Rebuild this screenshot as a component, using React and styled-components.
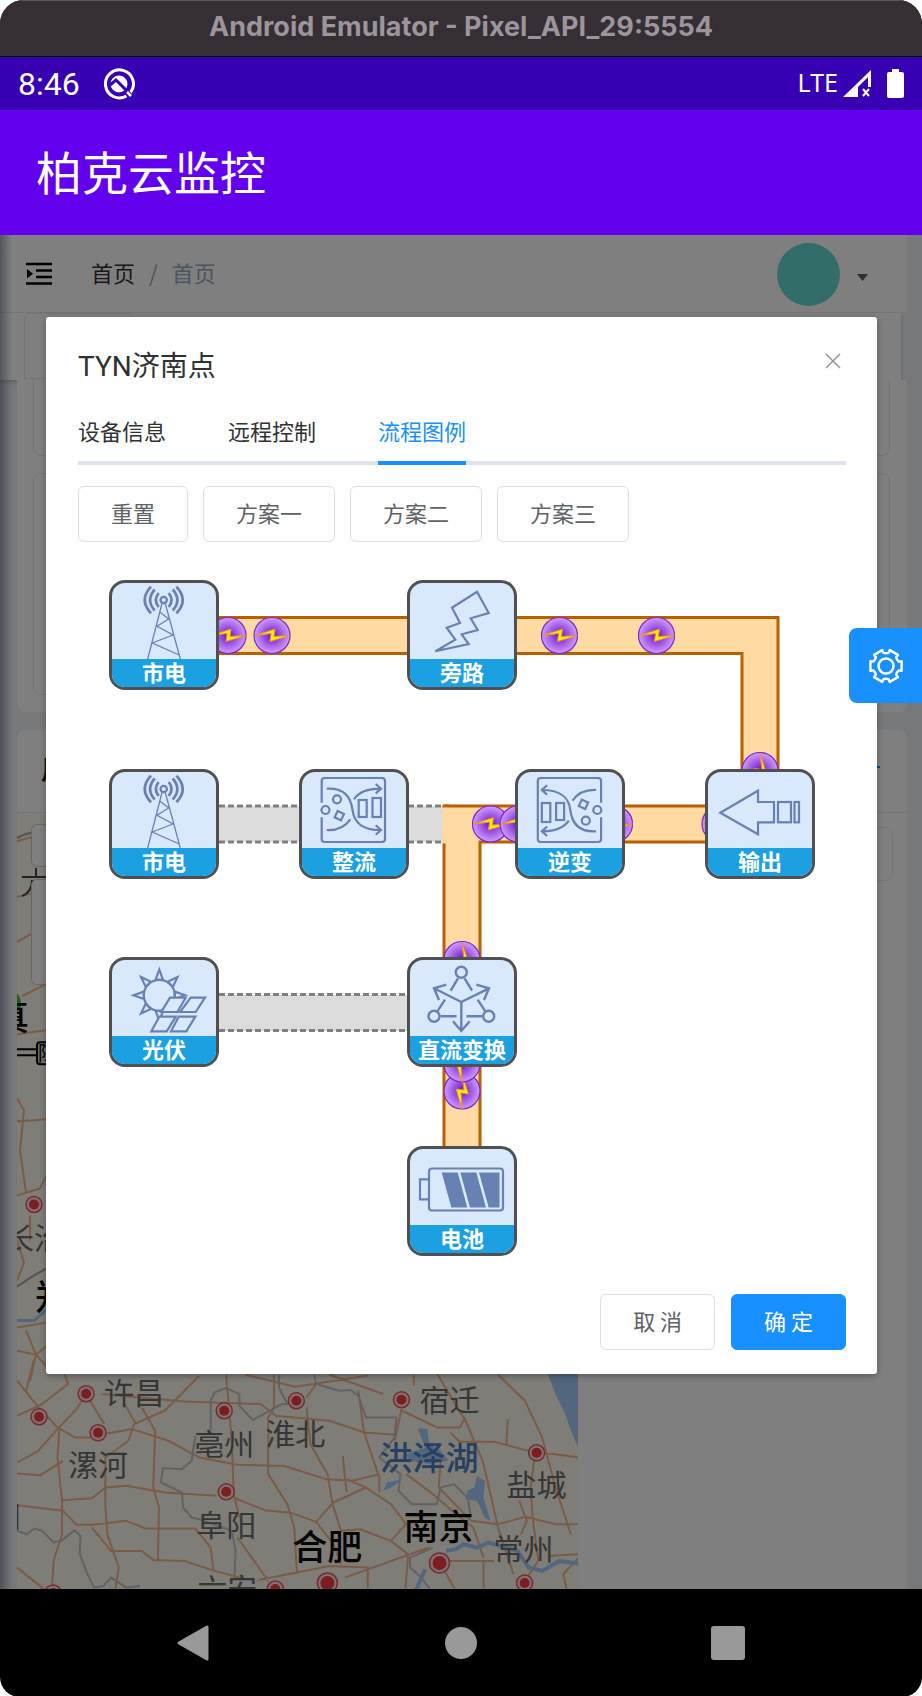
import React from 'react';
import styled, { createGlobalStyle, css } from 'styled-components';

const sans = '"Noto Sans CJK SC", "Noto Sans", sans-serif';
const latin = 'Roboto, "Noto Sans CJK SC", sans-serif';
const blue = '#1890ff';

const GlobalStyle = createGlobalStyle`
  *, *::before, *::after { box-sizing: border-box; }
  html { background: #fff; }
  body { margin: 0; font-family: ${sans}; }
  button { font: inherit; border: 0; padding: 0; background: none; cursor: pointer; }
  svg { display: block; }
`;

const Emulator = styled.div`
  display: flex;
  flex-direction: column;
  min-height: 100vh;
  border-radius: 24px 24px 20px 20px;
  overflow: hidden;
  background: #000;
`;

const TitleBar = styled.header`
  height: 57px;
  text-align: center;
  background: #352e34;
  border-top: 1px solid #5d575c;
  border-bottom: 1px solid #000;
  color: #9c959b;
  font: 700 27px/52px Inter, sans-serif;
`;

const StatusBar = styled.div`
  display: flex;
  align-items: center;
  justify-content: space-between;
  height: 53px;
  padding: 0 18px;
  background: #3700b3;
  color: #fff;
`;

const StatusGroup = styled.div`
  display: flex;
  align-items: center;
  gap: ${(p) => p.$gap}px;
`;

const Clock = styled.time`
  font: 400 32px/40px ${latin};
`;

const Network = styled.span`
  font: 400 25px/36px "Noto Sans", sans-serif;
  margin-right: 4px;
  padding-bottom: 4px;
`;

const AppBar = styled.div`
  display: flex;
  align-items: center;
  height: 125px;
  padding: 0 36px 6px;
  background: #6200ee;
`;

const AppTitle = styled.h1`
  margin: 0;
  color: #fff;
  font-size: 46px;
  font-weight: 400;
  line-height: 60px;
`;

const WebView = styled.div`
  flex: 1;
  display: grid;
  grid-template-columns: minmax(0, 1fr);
  position: relative;
`;

const Page = styled.div`
  grid-area: 1 / 1;
  display: flex;
  flex-direction: column;
  min-height: 0;
  position: relative;
  overflow: hidden;
  padding-right: 15px;
  background: #eef0f5;
  &::after {
    content: '';
    position: absolute;
    inset: 0 auto 0 0;
    width: 12px;
    background: linear-gradient(90deg, rgba(0, 21, 41, 0.35), rgba(0, 21, 41, 0));
  }
`;

const PageHeader = styled.div`
  display: flex;
  align-items: center;
  height: 78px;
  padding: 0 39px 0 26px;
  background: #fff;
  border-bottom: 1px solid #eceef2;
`;

const Crumbs = styled.nav`
  display: flex;
  flex: 1;
  gap: 14px;
  margin-left: 38px;
  padding-bottom: 4px;
  font-size: 22px;
  line-height: 30px;
  color: #97a8be;
`;

const Crumb = styled.a`
  color: ${(p) => (p.$current ? '#97a8be' : '#303133')};
  text-decoration: none;
`;

const Avatar = styled.div`
  width: 63px;
  height: 63px;
  margin: 2px 17px 0 0;
  border-radius: 50%;
  background: #66dad5;
`;

const Caret = styled.svg`
  margin-top: 7px;
`;

const TagStrip = styled.div`
  height: 67px;
  padding-left: 24px;
  margin-right: 6px;
  flex: none;
  background: #fff;
  box-shadow: 0 2px 4px rgba(0, 0, 0, 0.2);
`;

const Tag = styled.div`
  width: 110px;
  height: 66px;
  border: 1px solid #e4e7ed;
  border-radius: 6px 6px 0 0;
`;

const Card = styled.section`
  display: flex;
  flex-direction: column;
  margin-left: 17px;
  background: #fff;
  ${(p) =>
    p.$grow
      ? css`
          flex: 1;
          min-height: 0;
          margin-top: 18px;
          border-radius: 8px 8px 0 0;
        `
      : css`
          gap: 17px;
          padding: 0 17px 17px 16px;
          border-radius: 0 0 8px 8px;
        `}
`;

const Outline = styled.div`
  height: ${(p) => p.$height}px;
  border: 1px solid #e6e8f0;
  border-radius: ${(p) => (p.$open ? '0 0 8px 8px' : '8px')};
  border-top-width: ${(p) => (p.$open ? 0 : 1)}px;
`;

const CardHead = styled.div`
  display: flex;
  align-items: center;
  justify-content: space-between;
  height: 83px;
  flex: none;
  padding: 0 27px 8px 24px;
  border-bottom: 1px solid #e6e8f0;
  font-size: 26px;
  font-weight: 700;
  color: #222;
`;

const More = styled.span`
  width: 3px;
  height: 2px;
  background: ${blue};
`;

const MapRow = styled.div`
  display: flex;
  flex: 1;
  min-height: 0;
`;

const MapPane = styled.div`
  position: relative;
  width: 63%;
  overflow: hidden;
  background: #fefaf1;
`;

const MapControls = styled.div`
  position: absolute;
  top: 11px;
  left: 14px;
  width: 60px;
`;

const MapControl = styled.div`
  height: ${(p) => p.$height}px;
  margin-bottom: 12px;
  background: #fff;
  border: 1px solid #ccc;
  border-radius: 6px;
`;

const SidePane = styled.div`
  flex: 1;
  padding: 14px 14px 0;
`;

const Mask = styled.div`
  grid-area: 1 / 1;
  position: relative;
  padding: 82px 45px 0 46px;
  background: rgba(0, 0, 0, 0.5);
`;

const Dialog = styled.section`
  display: flex;
  flex-direction: column;
  padding: 32px 31px 24px 32px;
  background: #fff;
  border-radius: 3px;
  box-shadow: 0 2px 6px rgba(0, 0, 0, 0.3);
`;

const DialogHead = styled.div`
  display: flex;
  justify-content: space-between;
  margin-bottom: 31px;
`;

const DialogTitle = styled.h2`
  margin: 0;
  font: 400 28px/36px ${latin};
  color: #303133;
`;

const CloseButton = styled.button`
  width: 26px;
  height: 24px;
  display: grid;
  place-items: center;
`;

const Tabs = styled.div`
  display: flex;
  gap: 62px;
  background: linear-gradient(#dfe4ea, #dfe4ea) bottom / 100% 4px no-repeat;
`;

const Tab = styled.button`
  padding-bottom: 17px;
  font-size: 22px;
  line-height: 28px;
  color: ${(p) => (p.$active ? blue : '#303133')};
  border-bottom: 4px solid ${(p) => (p.$active ? blue : 'transparent')};
`;

const ButtonRow = styled.div`
  display: flex;
  gap: ${(p) => (p.$end ? 16 : 15)}px;
  justify-content: ${(p) => (p.$end ? 'flex-end' : 'flex-start')};
  margin-top: ${(p) => (p.$end ? 39 : 21)}px;
`;

const Button = styled.button`
  height: 56px;
  padding: 0 32px 4px;
  border: 1px solid ${(p) => (p.$primary ? blue : '#dcdfe6')};
  border-radius: 6px;
  background: ${(p) => (p.$primary ? blue : '#fff')};
  color: ${(p) => (p.$primary ? '#fff' : '#606266')};
  font-size: 22px;
  line-height: 28px;
`;

const Canvas = styled.div`
  position: relative;
  height: 675px;
  margin: 38px 0 0 31px;
`;

const NodeBox = styled.div`
  position: absolute;
  left: ${(p) => p.$x}px;
  top: ${(p) => p.$y}px;
  width: 110px;
  height: 110px;
  border: 3px solid #505050;
  border-radius: 16px;
  overflow: hidden;
  background: #dae8fc;
`;

const NodeLabel = styled.div`
  height: 28px;
  background: #1ba1e2;
  color: #fff;
  text-align: center;
  font-size: 22px;
  font-weight: 700;
  line-height: 24px;
  white-space: nowrap;
`;

const SettingsButton = styled.button`
  position: absolute;
  right: 0;
  top: 393px;
  width: 73px;
  height: 75px;
  display: grid;
  place-items: center;
  background: ${blue};
  border-radius: 8px 0 0 8px;
`;

const NavBar = styled.nav`
  display: grid;
  grid-template-columns: repeat(3, 1fr);
  justify-items: center;
  align-items: center;
  height: 108px;
  padding: 0 60px;
`;

const NavButton = styled.button`
  width: 40px;
  height: 40px;
`;

/* ---------- node icons ---------- */

const Tower = () => (
  <>
    <circle cx="54.7" cy="20" r="3.2" />
    <path strokeWidth="1.3" d="M53 23.5 38.7 79M56.3 23.5 71.3 79M51 32.3 59.7 39 48 46.3 64 55 43.3 63 70.3 75" />
    <path
      strokeWidth="2.7"
      d="M42 6.7Q29.500 20 42 33.300M45.700 9.500Q36.500 20 45.700 30.500M49.700 13Q44 20 49.700 27M67.400 6.700Q80 20 67.400 33.300M63.700 9.500Q73 20 63.700 30.500M59.700 13Q65.400 20 59.700 27"
    />
  </>
);

const Bolt = () => (
  <path d="M70 11.700 81.700 33 63.700 38.300 70.700 50 54.700 54.300 61.700 64 28.300 71.300 48.300 59.700 39.700 47.700 53 43 45 27.700Z" />
);

const Rectifier = () => (
  <>
    <path d="M22.700 33.700V12a3 3 0 0 1 3-3H83a3 3 0 0 1 3 3V70a3 3 0 0 1-3 3H25.700a3 3 0 0 1-3-3V48.300" />
    <circle cx="26.500" cy="41" r="4" />
    <circle cx="38" cy="30.300" r="4" />
    <rect x="36.800" y="43.200" width="7" height="7" transform="rotate(25 40.300 46.700)" />
    <path d="M27.700 19.700C46 18.500 52 29 53.500 41 55 53 62 61 82 61M27.700 61C38 61.500 46 58 51.300 50.300M55 30.300C60 23 69 19.500 82 19.700M76.700 15 82 19.700 76.700 24.300M76.700 56.300 82 61 76.700 65.700" />
    <rect x="59.700" y="31" width="8" height="17" />
    <rect x="73.500" y="29" width="8.500" height="19" />
  </>
);

const Inverter = () => (
  <g transform="rotate(180 54.400 41)">
    <Rectifier />
  </g>
);

const Output = () => (
  <>
    <path d="M15.300 43.700 53 21.700V33H69V53.300H53V65.300Z" />
    <rect x="73" y="33" width="13" height="20.300" />
    <rect x="89.500" y="33" width="4.500" height="20.300" />
  </>
);

const Solar = () => (
  <>
    <circle cx="50.300" cy="38.300" r="15.500" />
    {[0, 45, 90, 180, 225, 270, 315].map((a) => (
      <path key={a} transform={`rotate(${a} 50.300 38.300)`} d="M50.300 12.500 54 22.800H46.600Z" />
    ))}
    <g fill="#dae8fc">
      <path d="M61 40.700H76.700L68.300 55H52.300ZM81.700 40.700H96L86.700 55H71ZM50.300 59.700H66.700L57.700 74.300H42.300ZM69.700 59.700H86.300L77.300 74.300H62Z" />
    </g>
  </>
);

const Converter = () => (
  <g strokeWidth="2.400">
    <circle cx="54.300" cy="15.300" r="5.500" />
    <circle cx="27" cy="59.300" r="5.500" />
    <circle cx="81.700" cy="59.300" r="5.500" />
    <path d="M54.300 45 27 31.300M54.300 45 82 31.300M54.300 45V74M39.300 27.700 27 31.300 32 43M69.300 27.700 82 31.300 77 43M46 64.300 54.300 74 62.700 64.300M51 21.300 43.700 33.700M57.600 21.300 65 33.700M38 42.700 30.300 54.300M70.600 42.700 78.400 54.300M33.700 59.300H49.700M59.500 59.300H75.500" />
  </g>
);

const Battery = () => (
  <>
    <rect x="22" y="22.500" width="74" height="42" rx="3" />
    <path d="M22 33.300H13V53.300H22" />
    <path
      fill="#6881b3"
      stroke="none"
      d="M34.700 26.500H50.700L60.300 61.500H44.300ZM53.300 26.500H69.300L79 61.500H63ZM72 26.500H92.500V61.500H81.700Z"
    />
  </>
);

const nodes = [
  { x: 0, y: 0, label: '市电', Icon: Tower },
  { x: 298, y: 0, label: '旁路', Icon: Bolt },
  { x: 0, y: 189, label: '市电', Icon: Tower },
  { x: 190, y: 189, label: '整流', Icon: Rectifier },
  { x: 406, y: 189, label: '逆变', Icon: Inverter },
  { x: 596, y: 189, label: '输出', Icon: Output },
  { x: 0, y: 377, label: '光伏', Icon: Solar },
  { x: 298, y: 377, label: '直流变换', Icon: Converter },
  { x: 298, y: 566, label: '电池', Icon: Battery },
];

const DiagramNode = ({ x, y, label, Icon }) => (
  <NodeBox $x={x} $y={y}>
    <svg width="104" height="76" viewBox="3 3 104 76" fill="none" stroke="#6881b3" strokeWidth="2.200" aria-hidden="true">
      <Icon />
    </svg>
    <NodeLabel>{label}</NodeLabel>
  </NodeBox>
);

/* ---------- pipes and moving charges ---------- */

const charges = [
  [119, 55.5, 0],
  [163, 55.5, 0],
  [450.5, 55.5, 0],
  [547.5, 55.5, 0],
  [651, 190.5, 90],
  [381.500, 244, 0],
  [409, 244, 0],
  [505.500, 244, 0],
  [611, 244, 0],
  [353, 379.500, 90],
  [353, 511, 90],
  [353, 484, 90],
];

const Pipes = () => (
  <svg width="706" height="675" viewBox="0 0 706 675" fill="none" aria-hidden="true">
    <defs>
      <radialGradient id="charge">
        <stop offset="0" stopColor="#6a0fc4" />
        <stop offset="0.3" stopColor="#8a3bd8" />
        <stop offset="1" stopColor="#cf9cff" />
      </radialGradient>
    </defs>
    <path d="M100 244H340M100 433H310" stroke="#dcdcdc" strokeWidth="36" />
    <path
      d="M110 226H340M110 262H340M110 414.500H310M110 450.500H310"
      stroke="#808080"
      strokeWidth="3"
      strokeDasharray="6 3"
    />
    {[
      ['#b85f00', 39],
      ['#ffdba3', 33],
    ].map(([color, width]) => (
      <path
        key={color}
        stroke={color}
        strokeWidth={width}
        d="M100 55.500H651V200M353 390V244H620M353 480V580"
      />
    ))}
    <path d="M333 227.500H338V263.500H333Z" fill="#ffdba3" />
    {charges.map(([x, y, turn]) => (
      <g key={`${x}-${y}`} transform={`translate(${x} ${y}) rotate(${turn})`}>
        <circle r="18" fill="url(#charge)" stroke="#7d22cc" strokeWidth="1.200" />
        <path d="M-17 0 3-6.500 2 1 18 0-2 6-1-2Z" fill="#fff000" stroke="#ee8c30" strokeWidth="1" />
      </g>
    ))}
  </svg>
);

/* ---------- map ---------- */

const roads =
  'M88 0 68 90M45 60 90 125 150 200 195 230H240M45 165 110 130 178 70 155 0M45 305 100 270 150 205 200 145 224 100M230 110 272 190M265 100 480 122 680 130 720 165 860 180 950 215 1035 222M520 45 430 150 350 190 335 240 300 270 275 290V430L280 520 310 620 300 690M280 218 345 205 440 240 520 290 620 312 740 315 850 355 920 360 990 340M325 130 355 190M370 140 405 210 400 380 415 440 412 600M155 205 150 290 162 420V520L140 600 135 690M45 338 105 343 165 300M162 418 240 412 275 380 330 375 430 395 565 405M590 42 605 240 610 400 625 470M610 410 690 448 760 456 825 483 870 550 890 610M715 42V140L700 170V340L750 430 768 500 775 635M800 140 810 250 855 340 868 430 890 510 940 505 1020 540 1065 580 1058 690M825 483 870 425 955 380 1020 430 1060 490 1020 540M955 380 905 355M895 285 900 350 905 395M640 42 770 78 960 45M825 70 800 110M860 42 1000 100M1080 42V75M1050 150 1140 200H1200L1215 170M1048 145 1030 240M935 90 950 215 990 350V395M1120 0 1215 180 1260 300 1300 500 1340 640M1300 42 1370 120 1415 230 1450 380 1490 520M1175 215 1200 243H1290L1370 268 1510 290M1325 175 1322 250M45 433 165 450 200 492H240L330 480 380 503H510L550 560 557 630M240 500 290 570H370L400 597 480 600 560 630 640 655M675 657 860 615 960 620V690M900 650 1070 580 1120 560M620 530 700 660M1150 300 1145 380 1230 480 1300 490 1370 468 1450 490H1510M1170 600H1290M1160 630 1190 690M1262 602V690M1395 290 1385 380 1390 470 1405 600 1375 650M1355 420 1375 480 1360 520M1430 585 1510 580M1510 590 1470 640 1480 690M45 620 120 690M1060 340 1130 400 1180 450 1235 500 1262 590';

const borders =
  'M45 510 70 520 90 503 110 510 140 545 160 540 195 508 210 525 208 580 225 630 245 680 270 675 290 650 330 680 365 675M550 210V120L560 95 590 82 625 100V135L660 178 735 130H750L728 80V42M820 42 825 70 885 90 915 88 935 105 955 170H1035L1030 230 990 290 1045 340 1040 390 1075 430H1140L1150 380 1185 370 1220 410 1228 460M510 225 500 300 475 325 425 322 420 365 475 395 478 440 500 470 520 475 605 510 615 570 612 650M1130 560 1070 590V620L1100 650 1125 690';

const markers = [
  [34, 1204, 5], [86, 1393, 5], [39, 1416, 5], [98, 1432, 5], [224, 1410, 5], [296, 1400, 5], [401, 1399, 5],
  [536, 1452, 5], [226, 1491, 5], [439, 1562, 7], [327, 1582, 7], [275, 1588, 5], [524, 1582, 5], [53, 1592, 5],
];

const cities = [
  ['许昌', 104, 1403], ['漯河', 68, 1475], ['亳州', 194, 1454], ['淮北', 265, 1444], ['宿迁', 419, 1410],
  ['盐城', 506, 1495], ['阜阳', 196, 1535], ['常州', 493, 1559], ['六安', 197, 1599], ['阳', -9, 1526], ['长治', 4, 1248],
];

const capitals = [['合肥', 292, 1559], ['南京', 403, 1539], ['郑', 35, 1309], ['真', -6, 1030]];

const RoadMap = () => (
  <svg width="100%" height="100%" viewBox="17 813 560 775" preserveAspectRatio="xMinYMin slice" fill="none" fontFamily={sans}>
    <g stroke="#f5b78c" strokeWidth="2">
      <path d="M17 841 36 836M17 897 33 893M17 942 46 925 80 920M22 996 46 984M17 1034 46 1030M17 1121 46 1119M17 1098 24 1110 20 1150 26 1192M17 1195 40 1188 46 1176M17 1240 24 1262 17 1280M30 1215V1240M17 1327 46 1322M17 1350 36 1354 46 1346M26 1330 36 1354 30 1380M36 1354 50 1370" />
      <g transform="translate(0 1360) scale(.3827 .3333)">
        <path vectorEffect="non-scaling-stroke" strokeLinejoin="round" d={roads} />
      </g>
    </g>
    <g transform="translate(0 1360) scale(.3827 .3333)">
      <path vectorEffect="non-scaling-stroke" stroke="#c4c4c8" strokeWidth="2" strokeLinejoin="round" d={borders} />
      <path
        fill="#a5cdfb"
        d="M1430 40 1450 100 1475 160 1490 210 1512 268V40ZM1090 203 1115 205 1120 250 1150 270 1170 300 1120 310 1070 300 1060 280 1110 260ZM1245 345 1265 360 1262 410 1280 480 1265 470 1245 420 1215 415 1220 390 1238 380ZM1000 390 1010 365 1050 355 1025 378Z"
      />
      <path
        vectorEffect="non-scaling-stroke"
        stroke="#a5cdfb"
        strokeWidth="4"
        d="M1165 570 1190 565 1210 550 1245 560 1275 545 1350 570 1380 620 1415 630 1460 600 1510 608M1110 625 1085 690"
      />
    </g>
    <path d="M17 838Q28 831 46 832M17 1286 32 1276 46 1268" stroke="#a4a4a8" strokeWidth="2" />
    <path d="M17 1320 34 1320 48 1308" stroke="#a5cdfb" strokeWidth="3" />
    <path d="M22 877H46M36 868V877M22 896Q32 892 32 880" stroke="#444" strokeWidth="2" />
    <circle cx="7" cy="1003" r="14" fill="#56bb2c" />
    <path d="M17 1049H38M17 1055H38" stroke="#000" strokeWidth="2" />
    <rect x="37" y="1042" width="30" height="22" rx="3" fill="#ddd" stroke="#000" strokeWidth="2" />
    <text x="38" y="1061" fontSize="20" fill="#000">陈</text>
    {markers.map(([x, y, r]) => (
      <g key={`${x}-${y}`}>
        <circle cx={x} cy={y} r={r + 3} fill="#fbe6e2" stroke="#ee5560" strokeWidth="1.500" />
        <circle cx={x} cy={y} r={r} fill="#f83a42" />
      </g>
    ))}
    <g fontSize="30" fill="#6c6c6c">
      {cities.map(([name, x, y]) => (
        <text key={name} x={x} y={y}>{name}</text>
      ))}
    </g>
    <g fontSize="35" fontWeight="500" fill="#080808">
      {capitals.map(([name, x, y]) => (
        <text key={name} x={x} y={y}>{name}</text>
      ))}
    </g>
    <text x="379" y="1469" fontSize="33" fontWeight="500" fill="#4f80c4">洪泽湖</text>
  </svg>
);

/* ---------- small icons ---------- */

const gearPath = (() => {
  const at = (r, deg) => {
    const a = (deg * Math.PI) / 180;
    return `${(r * Math.cos(a)).toFixed(1)} ${(r * Math.sin(a)).toFixed(1)}`;
  };
  return `${[0, 60, 120, 180, 240, 300]
    .map(
      (t, i) =>
        `${i ? 'L' : 'M'}${at(13.4, t - 19)}L${at(16.3, t - 17)}L${at(16.3, t + 17)}L${at(13.4, t + 19)}Q${at(12.4, t + 30)} ${at(13.4, t + 41)}`
    )
    .join('')}Z`;
})();

const FoldIcon = () => (
  <svg width="27" height="24" viewBox="0 0 27 24" aria-hidden="true">
    <path d="M0 2H26M10 8.500H26M10 15H26M0 21.500H26" stroke="#000" strokeWidth="2.400" />
    <path d="M1 7 7 11.700 1 16.500Z" />
  </svg>
);

export default function App() {
  return (
    <>
      <GlobalStyle />
      <Emulator>
        <TitleBar>Android Emulator - Pixel_API_29:5554</TitleBar>
        <StatusBar>
          <StatusGroup $gap={23}>
            <Clock>8:46</Clock>
            <svg width="32" height="32" viewBox="-16 -16 32 32" fill="none" aria-hidden="true">
              <path d="M7.500 12A14 14 0 1 1 11.500 8.500" stroke="#fff" strokeWidth="3" />
              <circle r="8.500" fill="#fff" />
              <path d="M-9 1-3-4 11 10" stroke="#3700b3" strokeWidth="3" />
              <path d="M8 8 12 12" stroke="#fff" strokeWidth="2.500" />
            </svg>
          </StatusGroup>
          <StatusGroup $gap={0}>
            <Network>LTE</Network>
            <svg width="62" height="30" viewBox="842 68 62 30" fill="none" aria-hidden="true">
              <path d="M843 96 871 69V86H868V76L858 86V96Z" fill="#fff" />
              <path d="M863 88 869 95M869 88 863 95" stroke="#fff" strokeWidth="2" />
              <path d="M892 68H899V71H902Q904 71 904 73V95Q904 97 902 97H889Q887 97 887 95V73Q887 71 889 71H892Z" fill="#fff" />
            </svg>
          </StatusGroup>
        </StatusBar>
        <AppBar>
          <AppTitle>柏克云监控</AppTitle>
        </AppBar>

        <WebView>
          <Page>
            <PageHeader>
              <FoldIcon />
              <Crumbs aria-label="breadcrumb">
                <Crumb href="#home">首页</Crumb>
                <span>/</span>
                <Crumb href="#home" $current>首页</Crumb>
              </Crumbs>
              <Avatar />
              <Caret width="11" height="7" viewBox="0 0 11 7" aria-hidden="true">
                <path d="M0 0H11L5.500 7Z" fill="#5a5e66" />
              </Caret>
            </PageHeader>
            <TagStrip>
              <Tag />
            </TagStrip>
            <Card>
              <Outline $height={76} $open />
              <Outline $height={222} />
            </Card>
            <Card $grow>
              <CardHead>
                <span>用</span>
                <More />
              </CardHead>
              <MapRow>
                <MapPane>
                  <RoadMap />
                  <MapControls>
                    <MapControl $height={43} />
                    <MapControl $height={106} />
                  </MapControls>
                </MapPane>
                <SidePane>
                  <Outline $height={54} />
                </SidePane>
              </MapRow>
            </Card>
          </Page>

          <Mask>
            <Dialog role="dialog" aria-labelledby="dialog-title">
              <DialogHead>
                <DialogTitle id="dialog-title">TYN济南点</DialogTitle>
                <CloseButton aria-label="Close">
                  <svg width="16" height="16" viewBox="0 0 16 16" aria-hidden="true">
                    <path d="M1 1 15 15M15 1 1 15" stroke="#909399" strokeWidth="1.500" />
                  </svg>
                </CloseButton>
              </DialogHead>
              <Tabs role="tablist">
                <Tab role="tab">设备信息</Tab>
                <Tab role="tab">远程控制</Tab>
                <Tab role="tab" aria-selected="true" $active>流程图例</Tab>
              </Tabs>
              <ButtonRow>
                <Button>重置</Button>
                <Button>方案一</Button>
                <Button>方案二</Button>
                <Button>方案三</Button>
              </ButtonRow>
              <Canvas>
                <Pipes />
                {nodes.map((n) => (
                  <DiagramNode key={`${n.x}-${n.y}`} {...n} />
                ))}
              </Canvas>
              <ButtonRow $end>
                <Button>取 消</Button>
                <Button $primary>确 定</Button>
              </ButtonRow>
            </Dialog>
            <SettingsButton aria-label="Settings">
              <svg width="36" height="36" viewBox="-18 -18 36 36" fill="none" stroke="#fff" strokeWidth="2.400" strokeLinejoin="round" aria-hidden="true">
                <path d={gearPath} />
                <circle r="7.500" />
              </svg>
            </SettingsButton>
          </Mask>
        </WebView>

        <NavBar>
          <NavButton aria-label="Back">
            <svg width="40" height="40" viewBox="0 0 40 40" fill="#999" stroke="#999" strokeWidth="3" strokeLinejoin="round">
              <path d="M5 20 33 4V36Z" />
            </svg>
          </NavButton>
          <NavButton aria-label="Home">
            <svg width="40" height="40" viewBox="0 0 40 40" fill="#999">
              <circle cx="20" cy="20" r="16" />
            </svg>
          </NavButton>
          <NavButton aria-label="Overview">
            <svg width="40" height="40" viewBox="0 0 40 40" fill="#999">
              <rect x="3" y="3" width="34" height="34" rx="3" />
            </svg>
          </NavButton>
        </NavBar>
      </Emulator>
    </>
  );
}
